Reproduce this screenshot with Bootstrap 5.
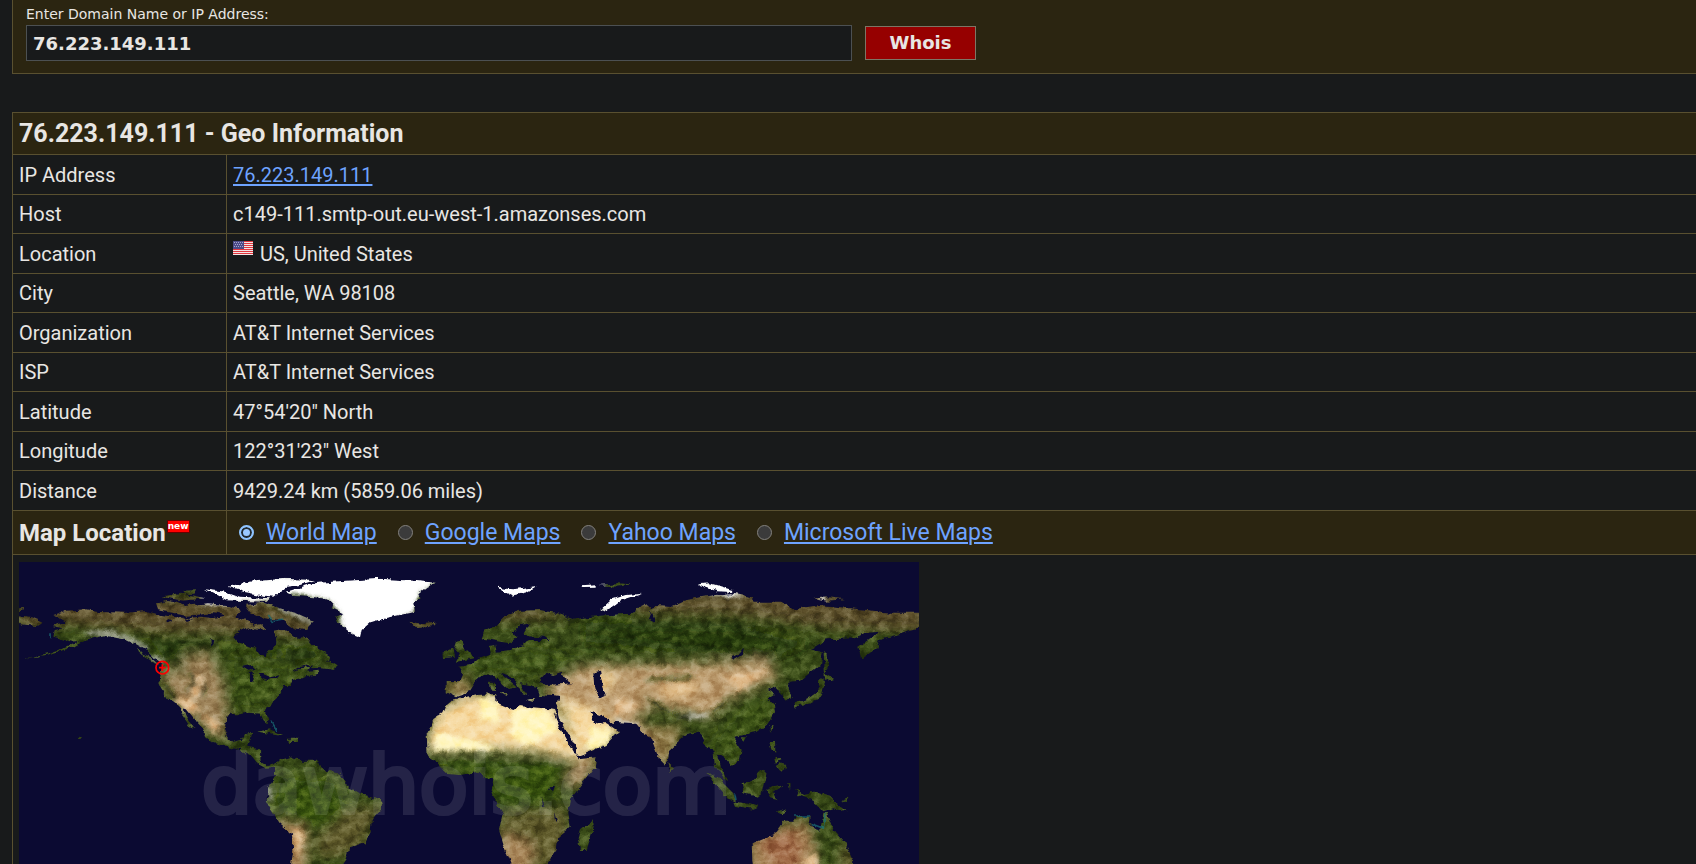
<!DOCTYPE html>
<html lang="en">
<head>
<meta charset="utf-8">
<meta name="viewport" content="width=device-width, initial-scale=1">
<title>76.223.149.111 - Whois</title>
<link href="https://cdn.jsdelivr.net/npm/bootstrap@5.3.0/dist/css/bootstrap.min.css" rel="stylesheet">
<style>
  body { background: #181a1b; color: #e8e6e3; font: 20px/24px Roboto, "Open Sans", sans-serif; }
  .page { height: 100vh; overflow: hidden; padding-left: 12px; }
  a { color: #6ea3ff; text-decoration-thickness: 2px; text-underline-offset: 2px; }
  .lookup { background: #2b2511; border: solid #595030; border-width: 0 0 1px 1px; padding: 5px 0 12px 13px; margin-bottom: 38px; font-family: "DejaVu Sans", sans-serif; }
  .lookup label { font-size: 14px; line-height: 18px; margin-bottom: 2px; }
  .lookup .controls { gap: 13px; }
  .lookup input { width: 826px; max-width: 80%; height: 36px; background: #181a1b; border: 1px solid #4c5052; color: #e8e6e3; font-size: 18px; font-weight: 700; padding: 0 6px; outline: 0; }
  .lookup button { width: 111px; height: 34px; background: #960000; border: 1px solid #7d7565; color: #e8e6e3; font-size: 18px; font-weight: 700; padding: 0; border-radius: 0; }
  .geo { border: solid #595030; border-width: 1px 0 0 1px; border-collapse: separate; border-spacing: 0; margin: 0; width: 100%; }
  .geo th, .geo td { border-bottom: 1px solid #595030; padding: 0 6px; text-align: left; font-weight: 400; vertical-align: middle; }
  .geo tr { height: 39px; }
  .geo tr:nth-child(even) { height: 40px; }
  .geo .bar th, .geo .bar td { background: #2b2511; font-size: 24px; }
  .geo .bar th { font-weight: 700; }
  .geo .bar .title { font-size: 25px; }
  .geo tr:first-child { height: 42px; }
  .geo tr.maps-bar { height: 44px; }
  .geo .name-col { width: 214px; border-right: 1px solid #595030; }
  .geo .map-cell { padding: 7px 6px; }
  .flag { vertical-align: 6px; margin-right: 2px; }
  .new-tag { background: #f00; border: 1px solid #600; color: #fff; font: 700 9px/8px "DejaVu Sans", sans-serif; padding: 0 0 1px; vertical-align: 12px; margin-left: 1px; }
  .choices { gap: 21px; padding-left: 6px; font-size: 23px; }
  .choices input { appearance: none; width: 15px; height: 15px; margin: 0 12px 0 0; border: 1px solid #83817d; border-radius: 50%; background: #3b3b3b; }
  .choices input:checked { border: 2px solid #8fc4ff; background: #99c8ff; box-shadow: inset 0 0 0 2px #222a30; }
  .world { width: 900px; max-width: 100%; height: auto; }
</style>
</head>
<body>
<main class="page">
  <form class="lookup" onsubmit="return false">
    <label for="query" class="d-block">Enter Domain Name or IP Address:</label>
    <div class="controls d-flex align-items-center">
      <input id="query" type="text" value="76.223.149.111">
      <button type="submit">Whois</button>
    </div>
  </form>

  <table class="geo">
    <tbody>
    <tr class="bar"><th class="title" colspan="2">76.223.149.111 - Geo Information</th></tr>
    <tr><th class="name-col" scope="row">IP Address</th><td><a href="#">76.223.149.111</a></td></tr>
    <tr><th class="name-col" scope="row">Host</th><td>c149-111.smtp-out.eu-west-1.amazonses.com</td></tr>
    <tr><th class="name-col" scope="row">Location</th><td><svg class="flag" width="20" height="14" viewBox="0 0 20 14" aria-hidden="true"><path fill="#f3e4e4" d="M0 0h20v14H0z"/><path stroke="#e0383f" d="M0 .5h20M0 2.500h20M0 4.500h20M0 6.500h20M0 8.500h20M0 10.500h20M0 12.500h20"/><path fill="#4c4b87" d="M0 0h11v8H0z"/><path stroke="#a5a4cc" stroke-dasharray="1 1" d="M1 1.500h9M2 3.500h8M1 5.500h9"/></svg> US, United States</td></tr>
    <tr><th class="name-col" scope="row">City</th><td>Seattle, WA 98108</td></tr>
    <tr><th class="name-col" scope="row">Organization</th><td>AT&amp;T Internet Services</td></tr>
    <tr><th class="name-col" scope="row">ISP</th><td>AT&amp;T Internet Services</td></tr>
    <tr><th class="name-col" scope="row">Latitude</th><td>47°54'20" North</td></tr>
    <tr><th class="name-col" scope="row">Longitude</th><td>122°31'23" West</td></tr>
    <tr><th class="name-col" scope="row">Distance</th><td>9429.24 km (5859.06 miles)</td></tr>
    <tr class="bar maps-bar"><th class="name-col" scope="row">Map Location<span class="new-tag">new</span></th>
      <td><div class="choices d-flex align-items-center">
        <div class="d-flex align-items-center"><input type="radio" name="map" id="m1" aria-label="World Map" checked><a href="#">World Map</a></div>
        <div class="d-flex align-items-center"><input type="radio" name="map" id="m2" aria-label="Google Maps"><a href="#">Google Maps</a></div>
        <div class="d-flex align-items-center"><input type="radio" name="map" id="m3" aria-label="Yahoo Maps"><a href="#">Yahoo Maps</a></div>
        <div class="d-flex align-items-center"><input type="radio" name="map" id="m4" aria-label="Microsoft Live Maps"><a href="#">Microsoft Live Maps</a></div>
      </div></td></tr>
    <tr><td class="map-cell" colspan="2">
      <svg class="world d-block" viewBox="57 36 2700 1350" role="img" aria-label="World map">
        <defs>
          <filter id="coast" x="57" y="36" width="2700" height="1350" filterUnits="userSpaceOnUse" color-interpolation-filters="sRGB"><feTurbulence type="fractalNoise" baseFrequency=".04" numOctaves="4" seed="4"/><feDisplacementMap in="SourceGraphic" scale="18" xChannelSelector="R" yChannelSelector="G"/></filter>
          <filter id="soft" x="-50%" y="-50%" width="200%" height="200%"><feGaussianBlur stdDeviation="16"/></filter>
          <filter id="soft2" x="-50%" y="-50%" width="200%" height="200%"><feGaussianBlur stdDeviation="6"/></filter>
          <filter id="grain" x="57" y="36" width="2700" height="1350" filterUnits="userSpaceOnUse" color-interpolation-filters="sRGB"><feTurbulence type="fractalNoise" baseFrequency=".03 .04" numOctaves="5" seed="9"/><feColorMatrix values="1.8 0 0 0 -.4  1.8 0 0 0 -.4  1.8 0 0 0 -.4  0 0 0 0 1"/></filter>
          <clipPath id="land">
            <!-- Americas -->
            <path d="M160 195L200 182 255 178 300 186 380 188 440 183 470 192 520 200 560 205 600 200 640 205 680 195 720 205 740 215 760 225 770 240 745 232 720 245 700 260 710 275 740 285 765 295 780 315 800 322 805 300 828 285 830 265 820 245 850 240 880 255 900 270 920 262 940 285 965 300 988 315 985 330 960 340 930 345 900 350 880 365 905 355 930 350 925 365 960 362 955 372 920 378 905 385 880 390 870 405 850 405 840 425 830 445 800 470 795 485 808 510 803 522 790 510 780 488 740 485 720 490 690 490 678 505 675 540 685 562 700 575 725 570 735 552 757 548 750 572 745 590 780 598 782 635 800 648 828 642 830 652 800 656 770 640 750 615 720 600 680 590 640 578 618 562 612 540 590 515 560 478 550 475 560 500 586 538 570 530 550 500 540 475 525 458 500 445 482 415 475 400 485 370 490 340 465 325 440 300 400 278 370 265 320 255 290 262 255 272 215 293 180 303 140 315 70 326 150 308 200 290 240 272 215 275 190 268 160 260 165 240 190 235 155 228 195 215Z"/>
            <path d="M825 645L840 630 870 622 900 632 950 632 985 665 1020 670 1045 710 1080 730 1140 750 1147 770 1115 810 1112 850 1095 880 1050 895 1040 930 1000 990 960 1060 930 1240 870 1200 860 1050 874 940 880 900 875 850 840 820 810 770 800 750 808 710 825 680Z"/>
            <path d="M468 160L500 150 530 155 560 167 620 160 680 165 720 180 705 200 640 190 560 197 475 180ZM485 140L540 128 615 145 550 152ZM735 165L790 158 840 175 890 190 942 213 915 240 880 235 845 210 790 205 750 185ZM685 110L750 95 850 86 945 90 900 105 860 110 820 140 780 135 730 125ZM615 118L680 126 720 140 810 145 800 156 680 151ZM550 122L585 121 580 131 555 132ZM755 228L780 222 800 240 770 236ZM57 195L100 203 132 215 110 228 57 222ZM57 175L72 174 70 180 57 180ZM775 545L810 538 852 558 820 554ZM860 566L890 566 892 576 865 576ZM930 354L950 332 985 335 1010 352 1005 360 965 355ZM236 560L246 562 240 568ZM410 290L425 305 420 312ZM415 308L450 318 478 342 455 334Z"/>
            <!-- Greenland, Iceland, Europe and Africa -->
            <path transform="translate(840)" d="M20 125L100 100 200 92 300 86 400 92 470 98 440 110 415 130 425 145 400 160 405 185 360 195 320 203 270 218 245 240 240 262 215 252 195 235 170 215 165 200 190 190 155 175 160 160 130 145 80 140 40 138ZM388 215L430 222 465 218 450 234 410 237ZM525 275L545 272 555 300 580 325 530 335 540 315 520 290ZM490 305L520 295 525 320 492 325ZM650 113L700 118 770 108 740 127 695 137ZM905 106L950 103 950 110 910 111ZM893 865L900 840 925 820 938 805 942 830 920 900 900 900ZM630 398L642 398 642 420 632 418ZM660 426L685 430 680 438ZM740 447L766 447 760 453Z"/>
            <path transform="translate(840)" d="M520 448L545 445 590 435 645 432 652 460 700 480 720 468 790 475 822 480 835 510 870 575 890 605 895 628 950 622 945 650 915 690 870 750 865 790 872 830 835 860 830 900 800 942 780 1000 720 1010 690 930 672 890 657 840 668 790 650 760 635 720 640 685 610 680 595 665 540 675 500 672 470 640 443 620 440 550 460 510 490 490 500 465Z"/>
            <path transform="translate(1800)" d="M-460 390L-415 390-407 372-425 350-385 345-360 322-328 310-332 285-315 283-310 305-270 300-225 285-300 275-355 265-348 245-310 225-280 195-240 182-180 180-130 190-80 208-110 215-60 205 0 197 105 190 110 175 140 160 160 180 165 165 215 168 250 152 310 140 390 130 460 142 460 158 540 158 580 178 660 165 800 180 870 188 970 188 970 232 930 242 880 260 840 270 828 295 785 328 775 290 840 245 800 248 760 265 680 268 630 298 665 310 660 345 600 392 570 395 560 410 578 440 560 455 545 425 520 410 500 420 525 432 505 445 522 465 525 490 500 525 470 545 430 555 400 560 425 600 420 630 395 648 375 625 350 610 360 650 385 695 370 690 345 650 340 600 320 590 300 548 260 555 210 600 208 625 195 650 180 635 152 560 130 550 105 520 35 515 0 495-30 485-10 520 20 520 57 545 20 585-65 618-80 580-120 515-130 480-122 440-180 435-190 410-240 400-220 435-235 430-260 385-300 370-250 412-270 420-320 375-360 380-380 400-400 430-435 442-460 430Z"/>
            <!-- Asian islands and Australia -->
            <path transform="translate(1800)" d="M205 640L222 655 212 667ZM322 668L350 680 400 730 408 755 385 745 350 705ZM400 755L440 760 475 770 460 776 405 768ZM425 700L455 690 485 658 500 675 490 725 470 740 430 730ZM500 720L520 712 552 706 520 724 532 750 510 745ZM585 713L612 735 650 726 690 740 740 787 700 775 670 784 640 752 600 737ZM508 573L525 573 526 605 515 600ZM540 640L556 645 548 668 530 655ZM512 525L522 528 513 545ZM420 562L438 562 430 575ZM583 460L610 452 635 440 655 425 658 388 674 398 665 440 630 460 600 466 588 480ZM670 366L700 384 672 394ZM670 302L682 312 687 350 675 368ZM458 880L525 850 550 815 580 815 590 798 632 800 628 825 660 845 670 788 680 788 700 840 735 880 760 930 750 1080 660 1090 480 1070 460 930ZM0 178L30 150 80 135 125 131 60 152 20 182ZM-5 105L50 100 95 103 50 110ZM290 103L330 100 400 120 395 126 350 124ZM640 145L690 142 735 148 680 152ZM530 785L560 775 545 790ZM720 755L750 742 740 756ZM565 700L572 700 570 722ZM525 620L545 630 530 638Z"/>
          </clipPath>
        </defs>
        <path fill="#0b0a32" d="M57 36h2700v1350H57z"/>
        <g filter="url(#coast)">
          <g clip-path="url(#land)">
            <path fill="#3a4c18" d="M57 36h2700v1350H57z"/>
            <g filter="url(#soft)">
              <!-- tundra -->
              <path fill="#5b5029" d="M57 140H760L960 220 930 262 700 250 460 245 200 225 57 235ZM1410 190L1600 170 1740 205 1500 215ZM1900 120H2780V245L2500 235 2200 195 1900 190ZM1200 200H1320V245H1200Z"/>
              <!-- boreal forest -->
              <path fill="#283b0e" d="M460 270L700 290 960 300 940 330 700 300 560 300 480 300ZM1760 220L2200 225 2420 280 2300 330 2040 300 1760 275ZM430 240L540 300 560 370 500 330Z"/>
              <path fill="#3d5219" d="M690 330L900 350 820 470 690 480ZM1370 330L1600 300 1760 330 1600 370 1400 360ZM2240 450L2330 430 2320 540 2180 640 2120 590Z"/>
              <!-- dry land -->
              <path fill="#a0865b" d="M550 320L630 310 670 400 680 520 680 570 600 520 530 460 490 400 500 350 560 380Z"/>
              <path fill="#bd9d70" d="M1640 400L1760 345 2100 340 2300 330 2340 380 2200 440 2130 500 1980 470 1900 500 1990 560 2010 640 1970 640 1880 530 1790 510 1650 450Z"/>
              <path fill="#927c4a" d="M1340 385H1410V440H1340ZM1930 530L2050 530 2020 600 2010 650 1980 650Z"/>
              <path fill="#f6d9a0" d="M1310 480L1420 430 1660 460 1750 640 1640 610 1500 600 1270 600ZM1670 440L1790 480 1870 550 1740 625ZM1790 370L1850 370 1820 420 1790 430Z"/>
              <path fill="#f2c88c" d="M1980 415L2090 395 2070 430 1990 435Z"/>
              <path fill="#35500f" d="M1280 620L1500 645 1700 620 1650 760 1500 760 1400 680ZM840 680L1000 700 1040 780 920 850 830 760ZM1930 430L2000 490 2080 515 2010 505 1940 460Z"/>
              <path fill="#5f5a2c" d="M1040 780L1150 760 1080 900 960 930 940 870ZM1500 790L1700 770 1700 950 1500 960ZM2520 880L2570 910 2570 1080 2510 1080Z"/>
              <path fill="#a9875a" d="M1500 850L1600 880 1590 980 1510 990ZM820 810L920 830 920 940 860 1060 850 880ZM2250 860L2420 810 2450 900 2430 1050 2250 1040ZM1740 620L1800 620 1740 710 1690 700Z"/>
              <path fill="#a06a46" d="M2270 870L2380 830 2410 900 2370 1000 2300 920Z"/>
            </g>
            <g filter="url(#soft2)">
              <path fill="#fff" d="M670 80H950L850 150 610 165 600 110ZM850 130L960 70H1340L1260 130 1240 190 1120 235 1080 280 1025 240 1020 190 980 148ZM1470 90H1810V145H1470ZM1800 185L1800 155 1860 120 1960 115 1940 150 1850 185ZM2070 85L2220 105 2220 140 2100 130ZM2460 140H2480V155H2460Z"/>
              <path fill="#fff5bd" d="M1540 470L1640 480 1680 540 1580 590 1530 560ZM1440 440L1490 450 1500 520 1440 510ZM1310 550L1430 570 1500 600 1300 600ZM1770 530L1840 540 1820 590 1760 600Z"/>
              <path fill="#e1bd8e" d="M520 450L570 440 600 480 570 490ZM610 490L660 520 640 560ZM590 370L610 390 590 450 570 430ZM2170 380L2300 360 2220 420ZM880 830L915 850 890 930ZM2410 930L2450 910 2460 960 2420 990ZM1850 440L1920 470 1840 500Z"/>
              <path fill="none" stroke="#d7d5d3" stroke-width="10" d="M260 250L330 250 400 272 440 298M450 320L490 335M840 170L940 218M810 710V750M1840 518L1910 521M2040 500L2120 498"/>
              <path fill="none" stroke="#2a3810" stroke-width="9" d="M1950 450L2010 490 2070 505M1940 390L2080 380M570 370L590 400 560 420M610 400V440M2140 490L2180 450M490 400L530 450"/>
            </g>
            <path style="mix-blend-mode:soft-light" opacity=".55" filter="url(#grain)" d="M57 36h2700v1350H57z"/>
          </g>
          <!-- inland seas and lakes -->
          <g fill="#0b0a32">
            <path d="M725 350L755 345 770 360 745 362ZM750 370L765 365 758 395 750 392ZM775 367L810 380 800 392 785 385ZM800 385L835 376 830 384ZM550 205L580 210 560 216ZM500 210L520 215 500 220ZM630 265L640 268 635 285Z"/>
            <path d="M1540 250L1560 225 1595 220 1575 240 1570 255 1635 260 1650 270 1590 270 1560 285 1530 300 1495 300 1530 280 1550 265ZM1618 395L1640 368 1660 375 1690 365 1685 378 1720 400 1640 405ZM1780 370L1800 365 1805 390 1820 435 1800 445 1783 415ZM1660 490L1690 520 1732 600 1724 612 1680 535ZM1770 485L1790 490 1808 525 1790 518ZM1645 712L1665 710 1658 730ZM1625 742L1638 775 1630 770ZM1662 780L1670 812 1665 815Z"/>
            <path d="M2190 322L2215 312 2232 292 2228 310 2200 328ZM1955 185L1965 210 1945 212ZM1860 190L1900 185 1895 192Z"/>
          </g>
          <path fill="none" stroke="#197078" stroke-width="5" opacity=".7" d="M805 195L820 215 850 210M2204 730L2208 750M2475 790L2470 835 2430 820M2385 798H2430M815 515L830 540M150 250V265"/>
        </g>
        <text x="604" y="790" font-family="DejaVu Sans, sans-serif" font-size="242" fill="#fff" stroke="#fff" stroke-width="12" opacity=".1">dawhois.com</text>
        <g fill="none" stroke="#f00" stroke-width="5"><circle cx="487" cy="353" r="19"/><path d="M477 353h20M487 343v20"/></g>
      </svg>
    </td></tr>
    </tbody>
  </table>
</main>
<script src="https://cdn.jsdelivr.net/npm/bootstrap@5.3.0/dist/js/bootstrap.bundle.min.js"></script>
</body>
</html>
